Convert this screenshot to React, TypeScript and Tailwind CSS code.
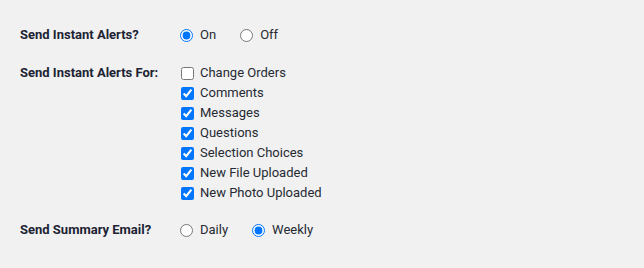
import React from "react";

const items = [
  { label: "Change Orders", checked: false },
  { label: "Comments", checked: true },
  { label: "Messages", checked: true },
  { label: "Questions", checked: true },
  { label: "Selection Choices", checked: true },
  { label: "New File Uploaded", checked: true },
  { label: "New Photo Uploaded", checked: true },
];

function Radio({ label, checked, name }: { label: string; checked: boolean; name: string }) {
  return (
    <label className="flex items-center h-5 mr-[10px]">
      <input type="radio" name={name} defaultChecked={checked} className="m-0 mr-[7px] w-[13px] h-[13px]" />
      <span>{label}</span>
    </label>
  );
}

export default function App() {
  return (
    <div
      className="w-[644px] h-[268px] bg-[#f1f1f1] text-[13px] text-[#262a33] pl-5 pt-[25px]"
      style={{ fontFamily: "Roboto, 'Liberation Sans', sans-serif" }}
    >
      <div className="flex items-center h-5">
        <div className="w-[160px] font-bold text-[#1c2333]">Send Instant Alerts?</div>
        <div className="flex gap-[14px]">
          <Radio label="On" checked name="alerts" />
          <Radio label="Off" checked={false} name="alerts" />
        </div>
      </div>
      <div className="flex mt-[18px]">
        <div className="w-[160px] font-bold text-[#1c2333] h-5 leading-5">Send Instant Alerts For:</div>
        <div className="flex flex-col">
          {items.map((it) => (
            <label key={it.label} className="flex items-center h-5">
              <input type="checkbox" defaultChecked={it.checked} className="m-0 ml-px mr-[6px] w-[13px] h-[13px]" />
              <span>{it.label}</span>
            </label>
          ))}
        </div>
      </div>
      <div className="flex items-center h-5 mt-[17px]">
        <div className="w-[160px] font-bold text-[#1c2333]">Send Summary Email?</div>
        <div className="flex gap-[14px]">
          <Radio label="Daily" checked={false} name="summary" />
          <Radio label="Weekly" checked name="summary" />
        </div>
      </div>
    </div>
  );
}
